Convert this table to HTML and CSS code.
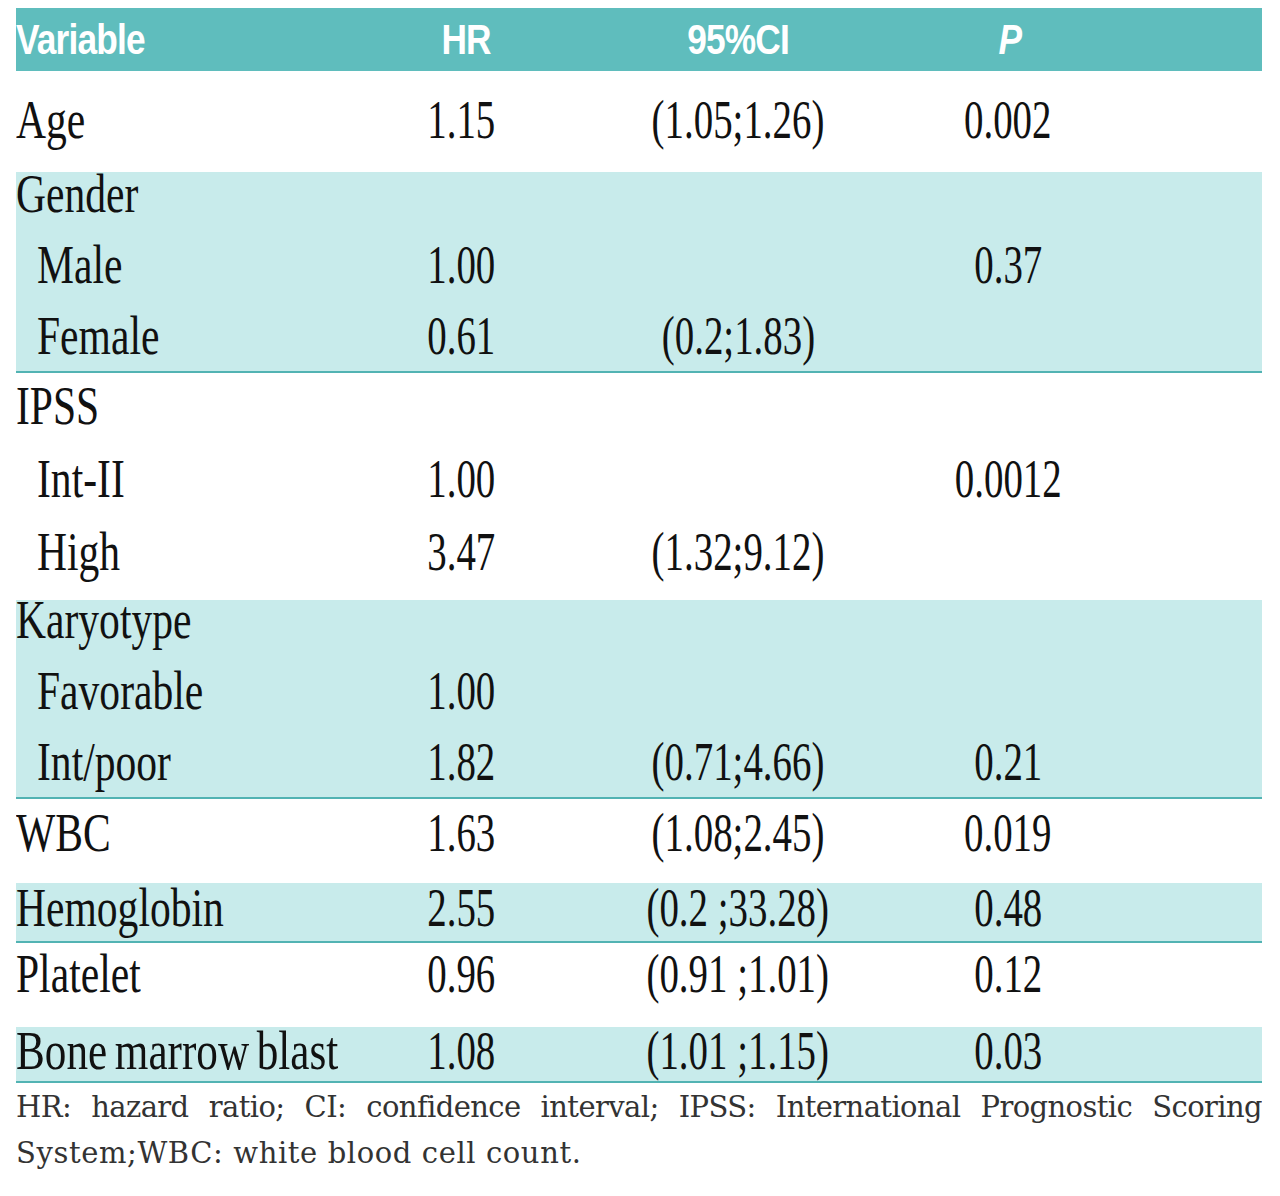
FILE: index.html
```
<!DOCTYPE html>
<html>
<head>
<meta charset="utf-8">
<link rel="stylesheet" href="styles.css">
</head>
<body>
<div class="table">
  <div class="thead">
    <div class="h c1"><span>Variable</span></div>
    <div class="h c2"><span>HR</span></div>
    <div class="h c3"><span>95%CI</span></div>
    <div class="h c4"><span class="it">P</span></div>
    <div class="h c5"></div>
  </div>

  <div class="group g-age">
    <div class="row"><div class="c1"><span>Age</span></div><div class="c2"><span>1.15</span></div><div class="c3"><span>(1.05;1.26)</span></div><div class="c4"><span>0.002</span></div><div></div></div>
  </div>

  <div class="group shaded g-gender">
    <div class="row"><div class="c1"><span>Gender</span></div><div class="c2"></div><div class="c3"></div><div class="c4"></div><div></div></div>
    <div class="row"><div class="c1 sub"><span>Male</span></div><div class="c2"><span>1.00</span></div><div class="c3"></div><div class="c4"><span>0.37</span></div><div></div></div>
    <div class="row"><div class="c1 sub"><span>Female</span></div><div class="c2"><span>0.61</span></div><div class="c3"><span>(0.2;1.83)</span></div><div class="c4"></div><div></div></div>
  </div>

  <div class="group g-ipss">
    <div class="row"><div class="c1"><span>IPSS</span></div><div class="c2"></div><div class="c3"></div><div class="c4"></div><div></div></div>
    <div class="row"><div class="c1 sub"><span>Int-II</span></div><div class="c2"><span>1.00</span></div><div class="c3"></div><div class="c4"><span>0.0012</span></div><div></div></div>
    <div class="row"><div class="c1 sub"><span>High</span></div><div class="c2"><span>3.47</span></div><div class="c3"><span>(1.32;9.12)</span></div><div class="c4"></div><div></div></div>
  </div>

  <div class="group shaded g-karyo">
    <div class="row"><div class="c1"><span>Karyotype</span></div><div class="c2"></div><div class="c3"></div><div class="c4"></div><div></div></div>
    <div class="row"><div class="c1 sub"><span>Favorable</span></div><div class="c2"><span>1.00</span></div><div class="c3"></div><div class="c4"></div><div></div></div>
    <div class="row"><div class="c1 sub"><span>Int/poor</span></div><div class="c2"><span>1.82</span></div><div class="c3"><span>(0.71;4.66)</span></div><div class="c4"><span>0.21</span></div><div></div></div>
  </div>

  <div class="group g-wbc">
    <div class="row"><div class="c1"><span>WBC</span></div><div class="c2"><span>1.63</span></div><div class="c3"><span>(1.08;2.45)</span></div><div class="c4"><span>0.019</span></div><div></div></div>
  </div>

  <div class="group shaded g-hemo">
    <div class="row"><div class="c1"><span>Hemoglobin</span></div><div class="c2"><span>2.55</span></div><div class="c3"><span>(0.2 ;33.28)</span></div><div class="c4"><span>0.48</span></div><div></div></div>
  </div>

  <div class="group g-plate">
    <div class="row"><div class="c1"><span>Platelet</span></div><div class="c2"><span>0.96</span></div><div class="c3"><span>(0.91 ;1.01)</span></div><div class="c4"><span>0.12</span></div><div></div></div>
  </div>

  <div class="group shaded g-bone">
    <div class="row"><div class="c1"><span class="wide">Bone marrow blast</span></div><div class="c2"><span>1.08</span></div><div class="c3"><span>(1.01 ;1.15)</span></div><div class="c4"><span>0.03</span></div><div></div></div>
  </div>
</div>

<div class="note">
  <div class="line justify">HR: hazard ratio; CI: confidence interval; IPSS: International Prognostic Scoring</div>
  <div class="line">System;WBC:&nbsp;white blood cell count.</div>
</div>
</body>
</html>
```

FILE: styles.css
```
html, body {
  margin: 0;
  padding: 0;
  background: #ffffff;
}

body {
  padding: 8px 0 0 16px;
  width: 1246px;
}

.table {
  width: 1246px;
}

.thead,
.row {
  display: grid;
  grid-template-columns: 364px 162px 392px 148px 1fr;
}

.thead {
  background: #5fbdbd;
  height: 63px;
  color: #ffffff;
  font-family: "Liberation Sans", Arial, sans-serif;
  font-weight: bold;
  font-size: 43px;
  line-height: 63px;
}

.thead span {
  display: inline-block;
  transform: scaleX(0.82);
  letter-spacing: -1px;
}

.thead .c1 span {
  transform-origin: left center;
}

.thead .c2 {
  padding-left: 10px;
}

.thead .c4 {
  padding-left: 4px;
}

.it {
  font-style: italic;
}

.c2, .c3, .c4 {
  text-align: center;
}

.row {
  height: 40px;
  font-family: "Liberation Serif", "Times New Roman", serif;
  font-size: 54px;
  line-height: 40px;
  color: #111111;
  white-space: nowrap;
}

.row span {
  display: inline-block;
  transform: scaleX(0.72);
  transform-origin: center center;
}

.row .c1 span {
  transform-origin: left center;
  transform: scaleX(0.77);
}

.row .c1 span.wide {
  transform: scaleX(0.8);
  word-spacing: -4px;
}

.c1.sub {
  padding-left: 21px;
}

.group {
  display: flex;
  flex-direction: column;
  gap: 31px;
}

.shaded {
  background: #c8ebeb;
  border-bottom: 2px solid #52b3b3;
}

.g-age { padding: 29px 0 32px; }
.g-gender { padding: 2px 0 15px; }
.g-ipss { padding: 13px 0 28px; gap: 33px; }
.g-karyo { padding: 0 0 15px; }
.g-wbc { padding: 14px 0 30px; }
.g-hemo { padding: 5px 0 13px; }
.g-plate { padding: 11px 0 33px; }
.g-bone { padding: 4px 0 10px; }

.note {
  width: 1246px;
  margin-top: 1px;
  font-family: "DejaVu Serif", serif;
  font-size: 29px;
  line-height: 46px;
  color: #333333;
}

.note .line {
  white-space: nowrap;
}

.note .line + .line {
  letter-spacing: 0.6px;
}

.note .justify {
  text-align: justify;
  text-align-last: justify;
  white-space: normal;
  letter-spacing: -0.6px;
}
```
